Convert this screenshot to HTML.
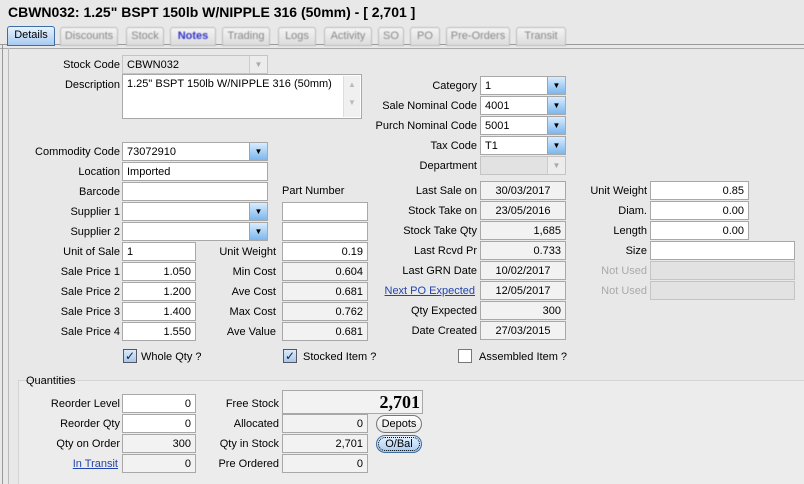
<!DOCTYPE html>
<html><head><meta charset="utf-8"><style>
*{box-sizing:border-box;margin:0;padding:0}
html{overflow:hidden;height:484px}
body{width:804px;height:484px;overflow:hidden;background:#e8e8e8;font-family:"Liberation Sans","DejaVu Sans",sans-serif;font-size:11px;color:#000;position:relative}
.a{position:absolute;white-space:nowrap}
.l{position:absolute;text-align:right;height:19px;line-height:21px;white-space:nowrap}
.b{position:absolute;height:19px;line-height:18px;border:1px solid #a8a8a8;background:#fff;padding:0 4px;white-space:nowrap}
.g{background:#f2f2f2}
.d{background:#e2e2e2;border-color:#c4c4c4}
.r{text-align:right}
.c{text-align:center}
.dd{position:absolute;right:0;top:0;width:18px;height:17px;background:linear-gradient(#d8ecff,#7cb6ec);border-left:1px solid #8ab;font-size:8px;line-height:17px;text-align:center;color:#000}
.dd.x{background:#ececec;color:#aaa;border-left:1px solid #ccc}
.tab{position:absolute;top:27px;height:19px;line-height:17px;border:1px solid #bbb;border-radius:3px 3px 0 0;background:linear-gradient(#f4f4f4,#dcdcdc);color:#888;text-align:center;font-size:11px;filter:blur(0.5px)}
.lk{color:#2244aa;text-decoration:underline}
.cb{position:absolute;width:14px;height:14px;border:1px solid #556;background:linear-gradient(#dbeaf9,#a9c8ea);font-size:12px;line-height:12px;text-align:center;color:#123}
.btn{position:absolute;height:18px;line-height:16px;border:1px solid #777;border-radius:9px;background:linear-gradient(#fff,#e4e4e4);text-align:center}
</style></head><body>
<div class="a" style="left:8px;top:4px;font-weight:bold;font-size:14px">CBWN032: 1.25" BSPT 150lb W/NIPPLE 316 (50mm) - [ 2,701 ]</div>
<div class="a" style="left:0;top:44px;width:804px;height:1px;background:#999"></div>
<div class="a" style="left:0;top:48px;width:804px;height:1px;background:#aaa"></div>
<div class="a" style="left:2px;top:44px;width:1px;height:440px;background:#999"></div>
<div class="a" style="left:8px;top:48px;width:1px;height:436px;background:#bbb"></div>
<div class="tab" style="left:7px;top:26px;width:48px;height:20px;background:linear-gradient(#e6f2ff,#a9cbf0);border-color:#3a6ea5;color:#000;filter:none">Details</div>
<div class="tab" style="left:60px;width:58px">Discounts</div>
<div class="tab" style="left:126px;width:38px">Stock</div>
<div class="tab" style="left:170px;width:46px;color:#33c;font-weight:bold">Notes</div>
<div class="tab" style="left:222px;width:48px">Trading</div>
<div class="tab" style="left:278px;width:38px">Logs</div>
<div class="tab" style="left:324px;width:48px">Activity</div>
<div class="tab" style="left:378px;width:26px">SO</div>
<div class="tab" style="left:410px;width:30px">PO</div>
<div class="tab" style="left:446px;width:64px">Pre-Orders</div>
<div class="tab" style="left:516px;width:50px">Transit</div>

<div class="l" style="left:20px;width:100px;top:55px">Stock Code</div>
<div class="b d" style="left:122px;top:55px;width:146px;background:#e8e8e8">CBWN032<div class="dd x">▼</div></div>
<div class="l" style="left:20px;width:100px;top:75px">Description</div>
<div class="b" style="left:122px;top:74px;width:240px;height:45px;line-height:18px">1.25" BSPT 150lb W/NIPPLE 316 (50mm)<div style="position:absolute;right:1px;top:1px;width:17px;height:41px;background:#f0f0f0;border-left:1px solid #ddd;color:#bbb;font-size:8px;text-align:center;line-height:18px">▲<br>▼</div></div>

<div class="l" style="left:20px;width:100px;top:142px">Commodity Code</div>
<div class="b" style="left:122px;top:142px;width:146px">73072910<div class="dd">▼</div></div>
<div class="l" style="left:20px;width:100px;top:162px">Location</div>
<div class="b" style="left:122px;top:162px;width:146px">Imported</div>
<div class="l" style="left:20px;width:100px;top:182px">Barcode</div>
<div class="b" style="left:122px;top:182px;width:146px"></div>
<div class="a" style="left:282px;top:185px">Part Number</div>
<div class="l" style="left:20px;width:100px;top:202px">Supplier 1</div>
<div class="b" style="left:122px;top:202px;width:146px"><div class="dd">▼</div></div>
<div class="b" style="left:282px;top:202px;width:86px"></div>
<div class="l" style="left:20px;width:100px;top:222px">Supplier 2</div>
<div class="b" style="left:122px;top:222px;width:146px"><div class="dd">▼</div></div>
<div class="b" style="left:282px;top:222px;width:86px"></div>

<div class="l" style="left:20px;width:100px;top:242px">Unit of Sale</div>
<div class="b" style="left:122px;top:242px;width:74px">1</div>
<div class="l" style="left:180px;width:96px;top:242px">Unit Weight</div>
<div class="b r" style="left:282px;top:242px;width:86px">0.19</div>
<div class="l" style="left:20px;width:100px;top:262px">Sale Price 1</div>
<div class="b r" style="left:122px;top:262px;width:74px">1.050</div>
<div class="l" style="left:180px;width:96px;top:262px">Min Cost</div>
<div class="b r g" style="left:282px;top:262px;width:86px">0.604</div>
<div class="l" style="left:20px;width:100px;top:282px">Sale Price 2</div>
<div class="b r" style="left:122px;top:282px;width:74px">1.200</div>
<div class="l" style="left:180px;width:96px;top:282px">Ave Cost</div>
<div class="b r g" style="left:282px;top:282px;width:86px">0.681</div>
<div class="l" style="left:20px;width:100px;top:302px">Sale Price 3</div>
<div class="b r" style="left:122px;top:302px;width:74px">1.400</div>
<div class="l" style="left:180px;width:96px;top:302px">Max Cost</div>
<div class="b r g" style="left:282px;top:302px;width:86px">0.762</div>
<div class="l" style="left:20px;width:100px;top:322px">Sale Price 4</div>
<div class="b r" style="left:122px;top:322px;width:74px">1.550</div>
<div class="l" style="left:180px;width:96px;top:322px">Ave Value</div>
<div class="b r g" style="left:282px;top:322px;width:86px">0.681</div>

<div class="l" style="left:370px;width:107px;top:76px">Category</div>
<div class="b" style="left:480px;top:76px;width:86px">1<div class="dd">▼</div></div>
<div class="l" style="left:370px;width:107px;top:96px">Sale Nominal Code</div>
<div class="b" style="left:480px;top:96px;width:86px">4001<div class="dd">▼</div></div>
<div class="l" style="left:370px;width:107px;top:116px">Purch Nominal Code</div>
<div class="b" style="left:480px;top:116px;width:86px">5001<div class="dd">▼</div></div>
<div class="l" style="left:370px;width:107px;top:136px">Tax Code</div>
<div class="b" style="left:480px;top:136px;width:86px">T1<div class="dd">▼</div></div>
<div class="l" style="left:370px;width:107px;top:156px">Department</div>
<div class="b d" style="left:480px;top:156px;width:86px"><div class="dd x">▼</div></div>

<div class="l" style="left:370px;width:107px;top:181px">Last Sale on</div>
<div class="b g c" style="left:480px;top:181px;width:86px">30/03/2017</div>
<div class="l" style="left:370px;width:107px;top:201px">Stock Take on</div>
<div class="b g c" style="left:480px;top:201px;width:86px">23/05/2016</div>
<div class="l" style="left:370px;width:107px;top:221px">Stock Take Qty</div>
<div class="b g r" style="left:480px;top:221px;width:86px">1,685</div>
<div class="l" style="left:370px;width:107px;top:241px">Last Rcvd Pr</div>
<div class="b g r" style="left:480px;top:241px;width:86px">0.733</div>
<div class="l" style="left:370px;width:107px;top:261px">Last GRN Date</div>
<div class="b g c" style="left:480px;top:261px;width:86px">10/02/2017</div>
<div class="l lk" style="left:370px;width:105px;top:281px">Next PO Expected</div>
<div class="b g c" style="left:480px;top:281px;width:86px">12/05/2017</div>
<div class="l" style="left:370px;width:107px;top:301px">Qty Expected</div>
<div class="b g r" style="left:480px;top:301px;width:86px">300</div>
<div class="l" style="left:370px;width:107px;top:321px">Date Created</div>
<div class="b g c" style="left:480px;top:321px;width:86px">27/03/2015</div>

<div class="l" style="left:560px;width:87px;top:181px">Unit Weight</div>
<div class="b r" style="left:650px;top:181px;width:99px">0.85</div>
<div class="l" style="left:560px;width:87px;top:201px">Diam.</div>
<div class="b r" style="left:650px;top:201px;width:99px">0.00</div>
<div class="l" style="left:560px;width:87px;top:221px">Length</div>
<div class="b r" style="left:650px;top:221px;width:99px">0.00</div>
<div class="l" style="left:560px;width:87px;top:241px">Size</div>
<div class="b" style="left:650px;top:241px;width:145px"></div>
<div class="l" style="left:560px;width:87px;top:261px;color:#aaa">Not Used</div>
<div class="b d" style="left:650px;top:261px;width:145px"></div>
<div class="l" style="left:560px;width:87px;top:281px;color:#aaa">Not Used</div>
<div class="b d" style="left:650px;top:281px;width:145px"></div>

<div class="cb" style="left:123px;top:349px">✓</div><div class="a" style="left:141px;top:351px">Whole Qty ?</div>
<div class="cb" style="left:283px;top:349px">✓</div><div class="a" style="left:303px;top:351px">Stocked Item ?</div>
<div class="cb" style="left:458px;top:349px;background:#fff;border-color:#777"></div><div class="a" style="left:479px;top:351px">Assembled Item ?</div>

<div class="a" style="left:18px;top:380px;width:790px;height:110px;border:1px solid #d4d4d4;background:#ececec"></div>
<div class="a" style="left:26px;top:375px">Quantities</div>
<div class="l" style="left:20px;width:100px;top:394px">Reorder Level</div>
<div class="b r" style="left:122px;top:394px;width:74px">0</div>
<div class="l" style="left:20px;width:100px;top:414px">Reorder Qty</div>
<div class="b r" style="left:122px;top:414px;width:74px">0</div>
<div class="l" style="left:20px;width:100px;top:434px">Qty on Order</div>
<div class="b r g" style="left:122px;top:434px;width:74px">300</div>
<div class="l lk" style="left:20px;width:98px;top:454px">In Transit</div>
<div class="b r g" style="left:122px;top:454px;width:74px">0</div>

<div class="l" style="left:180px;width:99px;top:394px">Free Stock</div>
<div class="b r g" style="left:282px;top:390px;width:141px;height:24px;line-height:22px;font-family:'Liberation Serif',serif;font-weight:bold;font-size:18px;padding-right:2px">2,701</div>
<div class="l" style="left:180px;width:99px;top:414px">Allocated</div>
<div class="b r g" style="left:282px;top:414px;width:86px">0</div>
<div class="l" style="left:180px;width:99px;top:434px">Qty in Stock</div>
<div class="b r g" style="left:282px;top:434px;width:86px">2,701</div>
<div class="l" style="left:180px;width:99px;top:454px">Pre Ordered</div>
<div class="b r g" style="left:282px;top:454px;width:86px">0</div>
<div class="btn" style="left:376px;top:415px;width:46px">Depots</div>
<div class="btn" style="left:376px;top:435px;width:46px;border-color:#3a6ea5;background:linear-gradient(#e6f2ff,#a9cbf0);outline:1px dotted #000;outline-offset:-3px">O/Bal</div>
</body></html>
